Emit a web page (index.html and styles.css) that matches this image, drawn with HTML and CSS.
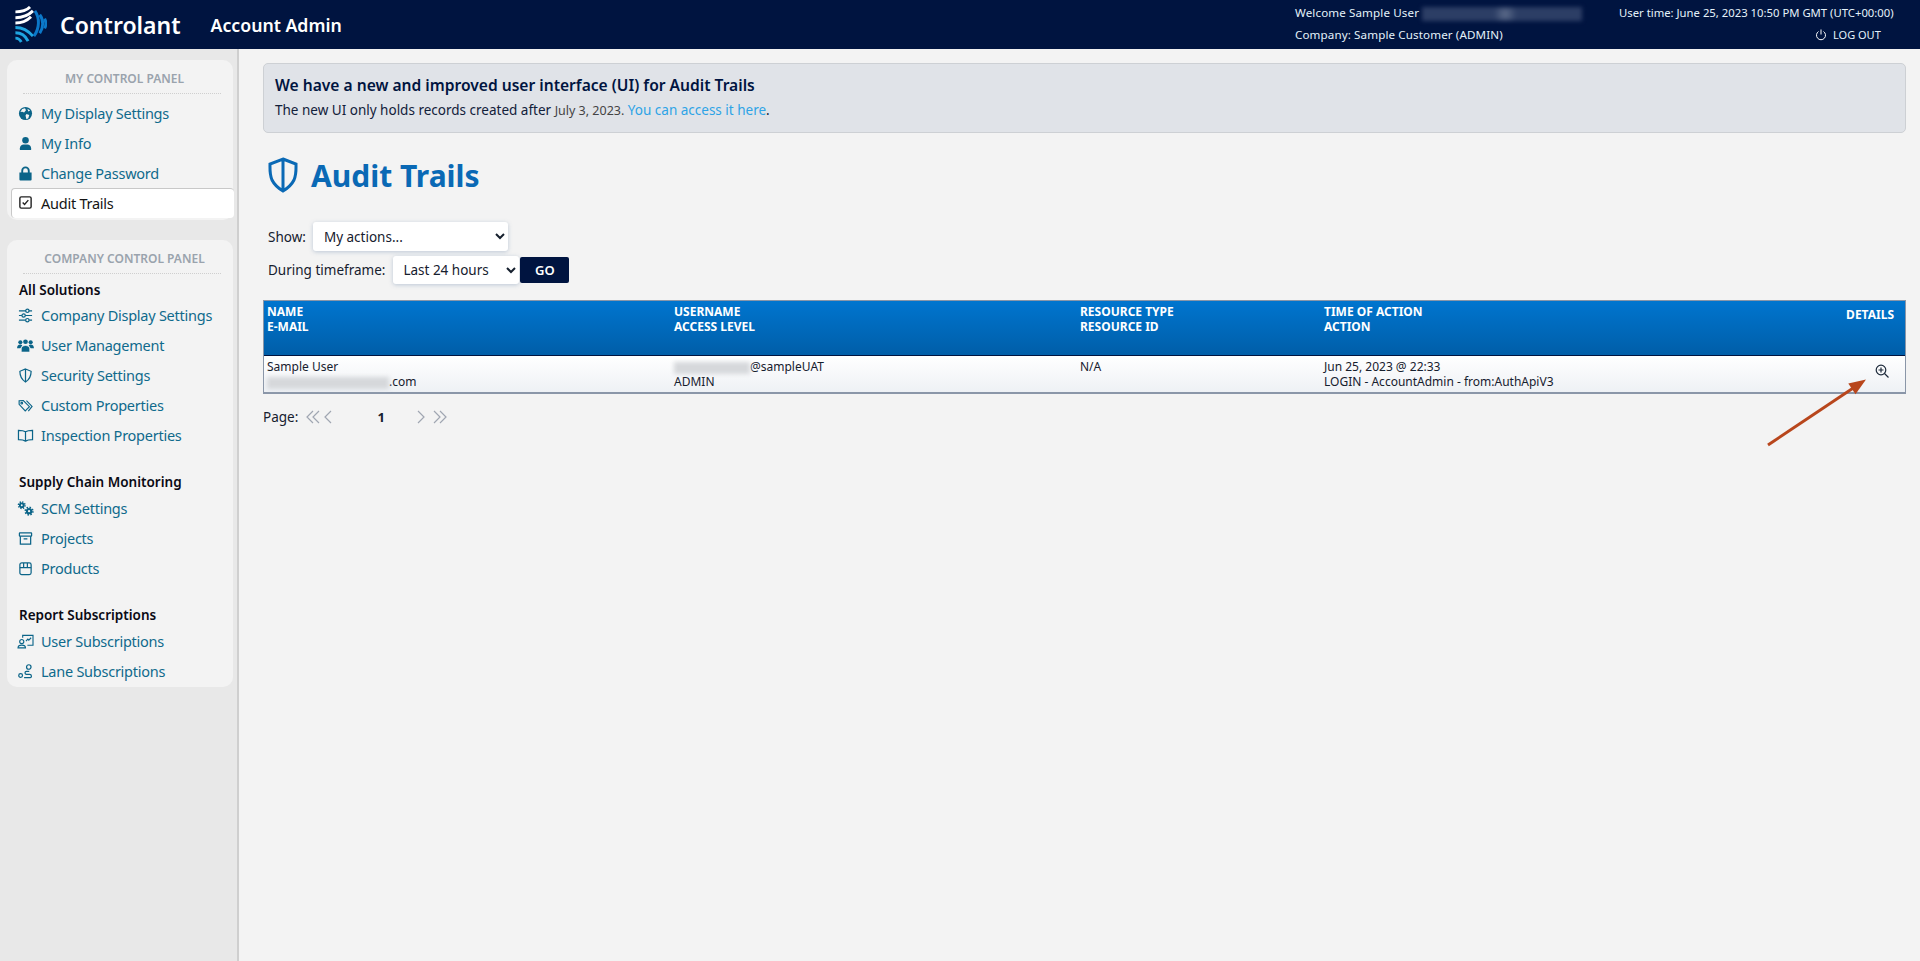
FILE: index.html
```html
<!DOCTYPE html>
<html lang="en">
<head>
<meta charset="utf-8">
<title>Audit Trails</title>
<link rel="stylesheet" href="styles.css">
</head>
<body>
<header class="topbar">
  <div class="brand">
    <svg class="logo" viewBox="0 0 32 38" fill="none" stroke-linecap="butt">
      <g stroke="#fff" stroke-width="3"><path d="M0 6C6 6 12 4 15 1"/><path d="M0 12C7 12 14 9 18 5"/><path d="M0 17.500C6 17.500 12 15 16 11"/></g>
      <g stroke="#1fa5e0" stroke-width="3"><path d="M0 22C6 22 13 25 18 31"/><path d="M0 27.500C5 27.500 10 30 13 36"/><path d="M0 33C3 33 5 35 6 37"/></g>
      <g stroke="#0b78c9" stroke-width="3"><path d="M20 5C25 12 25 23 19 31"/><path d="M25 9C29 14 29 22 25 28"/><path d="M30 13C31.500 16 31.500 20 30 23"/></g>
    </svg>
    <span class="brand-name">Controlant</span>
    <span class="app-name">Account Admin</span>
  </div>
  <div class="session">
    <div class="session-left">
      <div class="session-row">Welcome Sample User <span class="redact redact-head"></span></div>
      <div class="session-row">Company: Sample Customer (ADMIN)</div>
    </div>
    <div class="session-right">
      <div class="session-row">User time: June 25, 2023 10:50 PM GMT (UTC+00:00)</div>
      <div class="session-row logout">
        <svg class="power" viewBox="0 0 12 12" fill="none" stroke="#fff" stroke-width="1"><path d="M3.500 2.500a4.500 4.500 0 1 0 5 0"/><path d="M6 .5v5"/></svg>
        LOG OUT
      </div>
    </div>
  </div>
</header>
<div class="shell">
  <aside class="sidebar">
    <section class="panel">
      <h2 class="panel-title">MY CONTROL PANEL</h2>
      <a class="nav-item"><svg class="ico" viewBox="0 0 16 16"><circle cx="8" cy="8" r="7" fill="#0b6488"/><path fill="#f3f3f3" d="M4.500 3.200l3 -.7 1 2-2 2.500-2-1-2 .5zM9 8.500l3 1-1 3.500-2 1-1-4zM10 2.800l3 2-2 1z"/></svg>My Display Settings</a>
      <a class="nav-item"><svg class="ico" viewBox="0 0 16 16" fill="#0b6488"><circle cx="8" cy="4.500" r="3.500"/><path d="M2 15v-2c0-2.500 2-4 4-4h4c2 0 4 1.500 4 4v2z"/></svg>My Info</a>
      <a class="nav-item"><svg class="ico" viewBox="0 0 16 16" fill="#0b6488"><path d="M3.500 7V5a4.500 4.500 0 0 1 9 0v2H14.500v7.500a1 1 0 0 1-1 1h-11a1 1 0 0 1-1-1V7zM5.500 7h5V5a2.500 2.500 0 0 0-5 0z"/></svg>Change Password</a>
      <a class="nav-item nav-active"><svg class="ico" viewBox="0 0 16 16" fill="none" stroke="#222" stroke-width="1.500"><rect x="2" y="2" width="12" height="12" rx="1.500"/><path d="M5 8l2 2 4-4.500"/></svg>Audit Trails</a>
    </section>
    <section class="panel">
      <h2 class="panel-title">COMPANY CONTROL PANEL</h2>
      <h3 class="group-title">All Solutions</h3>
      <a class="nav-item"><svg class="ico" viewBox="0 0 16 16" fill="none" stroke="#0b6488" stroke-width="1.300"><path d="M1 3h14M1 8h14M1 13h14"/><circle cx="10" cy="3" r="1.800" fill="#f3f3f3"/><circle cx="6" cy="8" r="1.800" fill="#f3f3f3"/><circle cx="10" cy="13" r="1.800" fill="#f3f3f3"/></svg>Company Display Settings</a>
      <a class="nav-item"><svg class="ico ico-wide" viewBox="0 0 18 16" fill="#0b6488"><circle cx="3.500" cy="4.500" r="2.200"/><circle cx="14.500" cy="4.500" r="2.200"/><path d="M0 11c0-2.500 1.200-4 3.500-4 .9 0 1.600.2 2.100.6L3.500 11zM18 11c0-2.500-1.200-4-3.500-4-.9 0-1.600.2-2.100.6L14.500 11z"/><circle cx="9" cy="4" r="2.500"/><path d="M4.500 15v-3.500c0-2 2-3.500 4.500-3.500s4.500 1.500 4.500 3.500V15z" stroke="#f3f3f3" stroke-width=".7"/></svg>User Management</a>
      <a class="nav-item"><svg class="ico" viewBox="0 0 16 16" fill="none" stroke="#0b6488" stroke-width="1.300"><path d="M8 1l6 2.500c0 5-2 9-6 11.500-4-2.500-6-6.500-6-11.500zM8 1v14"/></svg>Security Settings</a>
      <a class="nav-item"><svg class="ico" viewBox="0 0 16 16" fill="none" stroke="#0b6488" stroke-width="1.200"><path d="M1.200 3v3.800l6.500 7 4.500-4.500-6.500-6.500z"/><circle cx="4" cy="5.500" r=".9"/><path d="M9 2.800l6 6.200-4 5"/></svg>Custom Properties</a>
      <a class="nav-item"><svg class="ico ico-wide" viewBox="0 0 18 16" fill="none" stroke="#0b6488" stroke-width="1.300"><path d="M9 4c-1.500-1-4-1.500-7.500-1.500v10c3.500 0 6 .5 7.500 1.500 1.500-1 4-1.500 7.500-1.500v-10C13 2.500 10.500 3 9 4zM9 4v10"/></svg>Inspection Properties</a>
      <h3 class="group-title group-gap">Supply Chain Monitoring</h3>
      <a class="nav-item"><svg class="ico ico-wide" viewBox="0 0 18 16" fill="none" stroke="#0b6488"><circle cx="5" cy="4.500" r="2" stroke-width="2"/><circle cx="5" cy="4.500" r="3.500" stroke-width="1.600" stroke-dasharray="1.400 1.350"/><circle cx="12.800" cy="10.800" r="2.300" stroke-width="2.200"/><circle cx="12.800" cy="10.800" r="4" stroke-width="1.800" stroke-dasharray="1.600 1.540"/></svg>SCM Settings</a>
      <a class="nav-item"><svg class="ico" viewBox="0 0 16 16" fill="none" stroke="#0b6488" stroke-width="1.300"><rect x="1.500" y="2" width="13" height="3.500" rx=".5"/><path d="M2.500 5.500V14h11V5.500M6 8.500h4"/></svg>Projects</a>
      <a class="nav-item"><svg class="ico" viewBox="0 0 16 16" fill="none" stroke="#0b6488" stroke-width="1.300"><rect x="2" y="2" width="12" height="12.500" rx="2"/><path d="M2 7h12M6 2v5M10 2v5"/></svg>Products</a>
      <h3 class="group-title group-gap">Report Subscriptions</h3>
      <a class="nav-item"><svg class="ico ico-wide" viewBox="0 0 18 16" fill="none" stroke="#0b6488" stroke-width="1.200"><path d="M6 4V1.500h11v10.500h-6M9.500 7.500l2-2 1 1 2.500-2.500"/><circle cx="5" cy="8" r="2.200"/><path d="M1 14.800c0-2 1.500-3 4-3s4 1 4 3z"/></svg>User Subscriptions</a>
      <a class="nav-item"><svg class="ico" viewBox="0 0 16 16" fill="none" stroke="#0b6488" stroke-width="1.300"><circle cx="2.800" cy="12.300" r="2"/><circle cx="11.500" cy="3.200" r="2.400"/><path d="M6.500 14.500h6.500c1.800 0 1.800-3.500-.5-3.500H9c-2 0-2-3.200 0-3.200h3"/></svg>Lane Subscriptions</a>
    </section>
  </aside>
  <main class="content">
    <div class="notice">
      <div class="notice-title">We have a new and improved user interface (UI) for Audit Trails</div>
      <div class="notice-text">The new UI only holds records created after <span class="notice-date">July 3, 2023.</span> <a class="notice-link">You can access it here</a>.</div>
    </div>
    <h1 class="page-title">
      <svg class="title-ico" viewBox="0 0 32 36" fill="none" stroke="#0a69b5" stroke-width="3"><path d="M16 2l13 5c0 6 .5 10-2 16-2 4-6 8-11 11C11 31 7 27 5 23 2.500 17 3 13 3 7zM16 2v32"/></svg>
      Audit Trails
    </h1>
    <form class="filters">
      <div class="filter-row">
        <label class="filter-label">Show:</label>
        <select class="select select-show"><option>My actions...</option></select>
      </div>
      <div class="filter-row">
        <label class="filter-label filter-label-time">During timeframe:</label>
        <select class="select select-time"><option>Last 24 hours</option></select>
        <button type="button" class="go">GO</button>
      </div>
    </form>
    <table class="grid">
      <thead>
        <tr>
          <th class="col-a">NAME<br>E-MAIL</th>
          <th class="col-b">USERNAME<br>ACCESS LEVEL</th>
          <th class="col-c">RESOURCE TYPE<br>RESOURCE ID</th>
          <th class="col-d">TIME OF ACTION<br>ACTION</th>
          <th class="col-e">DETAILS</th>
        </tr>
      </thead>
      <tbody>
        <tr>
          <td>Sample User<br><span class="redact redact-mail"></span>.com</td>
          <td><span class="redact redact-user"></span>@sampleUAT<br>ADMIN</td>
          <td>N/A</td>
          <td>Jun 25, 2023 @ 22:33<br>LOGIN - AccountAdmin - from:AuthApiV3</td>
          <td class="cell-details"><svg class="zoom-ico" viewBox="0 0 14 14" fill="none" stroke="#1d2a3a" stroke-width="1.200"><circle cx="6" cy="6" r="4.800"/><path d="M9.500 9.500L13.500 13.500M6 3.500v5M3.500 6h5"/></svg></td>
        </tr>
      </tbody>
    </table>
    <nav class="pager">
      <span class="pager-label">Page:</span>
      <svg class="pager-ico" viewBox="0 0 14 14" fill="none" stroke="#a0a6b2" stroke-width="1.200"><path d="M7 1L1 7l6 6M13 1L7 7l6 6"/></svg>
      <svg class="pager-ico pager-one" viewBox="0 0 8 14" fill="none" stroke="#a0a6b2" stroke-width="1.200"><path d="M7 1L1 7l6 6"/></svg>
      <span class="pager-num">1</span>
      <svg class="pager-ico pager-one" viewBox="0 0 8 14" fill="none" stroke="#a0a6b2" stroke-width="1.200"><path d="M1 1l6 6-6 6"/></svg>
      <svg class="pager-ico pager-last" viewBox="0 0 14 14" fill="none" stroke="#a0a6b2" stroke-width="1.200"><path d="M1 1l6 6-6 6M7 1l6 6-6 6"/></svg>
    </nav>
  </main>
</div>
<svg class="callout" viewBox="0 0 110 80" fill="none"><path d="M2 73L88 15.500" stroke="#b8461c" stroke-width="3"/><path d="M100 7.500L82.300 11.500 89.500 22.300z" fill="#b8461c"/></svg>
</body>
</html>
```
FILE: styles.css
```css
* { box-sizing: border-box; }
html, body { height: 100%; }
body {
  margin: 0;
  height: 961px;
  overflow: hidden;
  display: flex;
  flex-direction: column;
  background: #f3f3f3;
  color: #16202e;
  font-family: "Noto Sans", "Open Sans", sans-serif;
  font-size: 13px;
  position: relative;
}
.topbar {
  height: 49px;
  flex: none;
  background: #001440;
  color: #fff;
  display: flex;
  justify-content: space-between;
}
.brand { display: flex; align-items: center; padding-left: 15px; }
.logo { width: 32px; height: 37px; }
.brand-name { font-size: 23px; font-weight: 600; margin-left: 13px; }
.app-name { font-size: 17.700px; font-weight: 600; margin-left: 30px; }
.session { display: flex; font-size: 11.600px; color: #e4f2fa; }
.session-left { width: 324px; letter-spacing: .12px; }
.session-right { width: 301px; font-size: 11.300px; }
.session-row { height: 22px; line-height: 22px; margin-top: 2px; white-space: nowrap; }
.session-left .session-row + .session-row, .session-right .session-row + .session-row { margin-top: 0; }
.logout { display: flex; align-items: center; padding-left: 196px; font-size: 11px; }
.power { width: 12px; height: 12px; margin-right: 6px; }
.redact { display: inline-block; vertical-align: middle; filter: blur(2px); }
.redact-head { width: 160px; height: 14px; background: radial-gradient(circle at 52% 50%, #5c6b8a 0, #2c3e65 14%); }
.redact-mail { width: 122px; height: 12px; background: #d6d8db; }
.redact-user { width: 76px; height: 12px; background: #d6d8db; }
.shell { flex: 1; display: flex; min-height: 0; }
.sidebar {
  width: 239px;
  flex: none;
  background: #e8e8e8;
  border-right: 2px solid #cfcfcf;
  padding: 11px 4px 0 7px;
}
.panel {
  background: #f3f3f3;
  border-radius: 10px;
  padding: 0 0 2px 0;
  margin-bottom: 20px;
}
.panel + .panel { padding-bottom: 1px; }
.panel-title {
  margin: 0 12px 4px 16px;
  padding-left: 5px;
  height: 34px;
  line-height: 38px;
  text-align: center;
  font-size: 12px;
  font-weight: 600;
  color: #9aa3ad;
  border-bottom: 1px dotted #cfcfcf;
}
.nav-item {
  display: flex;
  align-items: center;
  height: 30px;
  padding-left: 11px;
  color: #0f6a8c;
  font-size: 14.500px;
  letter-spacing: -.25px;
}
.ico { width: 15px; height: 15px; margin-right: 8px; flex: none; overflow: visible; }
.ico-wide { width: 17px; margin-left: -1px; margin-right: 7px; }
.nav-active {
  background: #fff;
  color: #141414;
  border: 1px solid #c8c8c8;
  border-right: 0;
  border-bottom: 0;
  border-radius: 4px;
  margin: 0 -1px 0 4px;
  padding: 0 0 2px 6px;
}
.group-title { margin: 0; padding-left: 12px; font-size: 13.500px; font-weight: 600; color: #0a0a14; height: 22px; line-height: 24px; }
.group-gap { margin-top: 18px; height: 25px; line-height: 28px; }
.content { flex: 1; min-width: 0; padding: 14px 14px 0 24px; }
.notice {
  height: 70px;
  background: #e0e3e8;
  border: 1px solid #cdd0d4;
  border-radius: 5px;
  padding: 8px 11px;
}
.notice-title { font-size: 15.600px; font-weight: 600; color: #001440; line-height: 27px; }
.notice-text { font-size: 13.500px; color: #12203a; line-height: 22px; }
.notice-date { font-size: 12.500px; color: #444; }
.notice-link { color: #2ea3e6; }
.page-title {
  margin: 22px 0 0 4px;
  display: flex;
  align-items: center;
  height: 40px;
  font-size: 30px;
  font-weight: 700;
  color: #0a69b5;
}
.title-ico { width: 32px; height: 36px; margin-right: 12px; }
.filters { margin-top: 27px; padding-left: 5px; }
.filter-row { display: flex; align-items: center; }
.filter-row + .filter-row { margin-top: 5px; }
.filter-label { font-size: 13.500px; color: #16202e; margin-right: 7px; }
.filter-label-time { margin-right: 8px; }
.select {
  border: 0;
  border-radius: 3px;
  background: #fff;
  box-shadow: 0 1px 4px rgba(90, 120, 160, .35);
  font-family: inherit;
  font-size: 13.500px;
  color: #16202e;
  padding-left: 7px;
  height: 29px;
}
.select-show { width: 195px; }
.select-time { width: 126px; height: 28px; padding-left: 6px; }
.go {
  width: 49px;
  height: 26px;
  margin-left: 1px;
  border: 0;
  border-radius: 2px;
  background: #001440;
  color: #fff;
  font-family: inherit;
  font-size: 13px;
  font-weight: 600;
}
.grid {
  margin-top: 16px;
  width: 100%;
  table-layout: fixed;
  border-collapse: separate;
  border-spacing: 0;
  border: 1px solid #8a96a8;
  border-bottom-width: 2px;
  font-size: 12px;
}
.grid th {
  height: 55px;
  padding: 3px 3px 0;
  vertical-align: top;
  text-align: left;
  font-size: 12px;
  font-weight: 700;
  line-height: 15px;
  color: #fff;
  background: linear-gradient(#0075cf, #005ea8);
  border-bottom: 1px solid #001440;
}
.col-a { width: 407px; }
.col-b { width: 406px; }
.col-c { width: 244px; }
.col-e { width: 90px; }
.grid th.col-e { text-align: right; padding: 6px 11px 0 0; }
.grid td {
  height: 36px;
  padding: 3px 3px 0;
  vertical-align: top;
  line-height: 15px;
  background: linear-gradient(#fff, #eef1f5);
  color: #16202e;
}
.grid td.cell-details { text-align: right; padding: 8px 16px 0 0; }
.zoom-ico { width: 14px; height: 14px; display: inline-block; }
.pager { display: flex; align-items: center; height: 20px; margin-top: 13px; }
.pager-label { font-size: 13.500px; margin-right: 8px; }
.pager-ico { width: 14px; height: 14px; }
.pager-one { width: 8px; margin-left: 4px; }
.pager-num { width: 81px; padding-left: 17px; text-align: center; font-weight: 700; }
.pager-last { margin-left: 8px; }
.callout { position: absolute; left: 1766px; top: 372px; width: 110px; height: 80px; }
```
